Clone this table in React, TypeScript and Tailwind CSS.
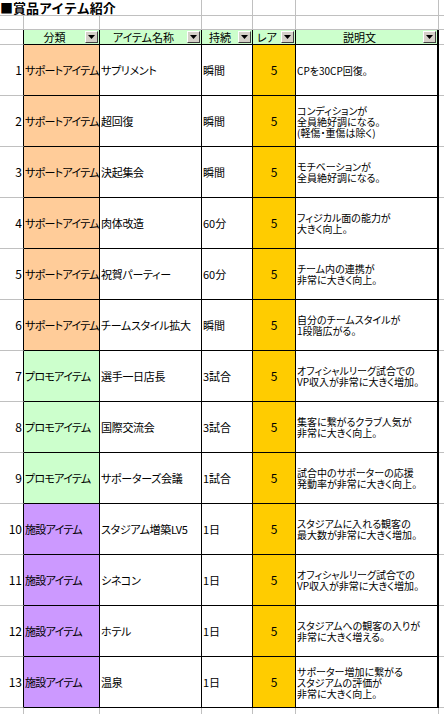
import React from 'react'

type Kind = 'support' | 'promo' | 'facility'

type Item = {
  kind: Kind
  name: string
  dur: string
  desc: string[]
}

const CAT_LABEL: Record<Kind, string> = {
  support: 'サポートアイテム',
  promo: 'プロモアイテム',
  facility: '施設アイテム',
}

const CAT_BG: Record<Kind, string> = {
  support: 'bg-[#ffcc99]',
  promo: 'bg-[#ccffcc]',
  facility: 'bg-[#cc99ff]',
}

const items: Item[] = [
  { kind: 'support', name: 'サプリメント', dur: '瞬間', desc: ['CPを30CP回復。'] },
  { kind: 'support', name: '超回復', dur: '瞬間', desc: ['コンディションが', '全員絶好調になる。', '(軽傷・重傷は除く)'] },
  { kind: 'support', name: '決起集会', dur: '瞬間', desc: ['モチベーションが', '全員絶好調になる。'] },
  { kind: 'support', name: '肉体改造', dur: '60分', desc: ['フィジカル面の能力が', '大きく向上。'] },
  { kind: 'support', name: '祝賀パーティー', dur: '60分', desc: ['チーム内の連携が', '非常に大きく向上。'] },
  { kind: 'support', name: 'チームスタイル拡大', dur: '瞬間', desc: ['自分のチームスタイルが', '1段階広がる。'] },
  { kind: 'promo', name: '選手一日店長', dur: '3試合', desc: ['オフィシャルリーグ試合での', 'VP収入が非常に大きく増加。'] },
  { kind: 'promo', name: '国際交流会', dur: '3試合', desc: ['集客に繋がるクラブ人気が', '非常に大きく向上。'] },
  { kind: 'promo', name: 'サポーターズ会議', dur: '1試合', desc: ['試合中のサポーターの応援', '発動率が非常に大きく向上。'] },
  { kind: 'facility', name: 'スタジアム増築LV5', dur: '1日', desc: ['スタジアムに入れる観客の', '最大数が非常に大きく増加。'] },
  { kind: 'facility', name: 'シネコン', dur: '1日', desc: ['オフィシャルリーグ試合での', 'VP収入が非常に大きく増加。'] },
  { kind: 'facility', name: 'ホテル', dur: '1日', desc: ['スタジアムへの観客の入りが', '非常に大きく増える。'] },
  { kind: 'facility', name: '温泉', dur: '1日', desc: ['サポーター増加に繋がる', 'スタジアムの評価が', '非常に大きく向上。'] },
]

function Gray() {
  return <div className="border-r border-b border-[#c0c0c0]" />
}

function FilterButton() {
  return (
    <div className="mr-px flex h-[12px] w-[13px] shrink-0 items-center justify-center border border-t-white border-l-white border-r-[#404040] border-b-[#404040] bg-[#d4d0c8]">
      <svg width="7" height="4" viewBox="0 0 7 4">
        <path d="M0 0h7L3.5 4z" fill="#000" />
      </svg>
    </div>
  )
}

function HeadCell({ label, last }: { label: string; last?: boolean }) {
  return (
    <div
      className={
        'flex items-center bg-[#ccffcc] border-b border-b-black ' +
        (last ? 'border-r-2 border-r-black' : 'border-r border-r-black')
      }
    >
      <div className="flex-1 text-center text-[11px] leading-none whitespace-nowrap">{label}</div>
      <FilterButton />
    </div>
  )
}

export default function App() {
  return (
    <div className="h-[714px] w-[444px] overflow-hidden bg-white text-black font-['Noto_Sans_CJK_JP',sans-serif] [font-feature-settings:'palt']">
      <div className="grid h-full grid-cols-[24px_76px_102px_51px_43px_143px_1fr] grid-rows-[16px_14px_15px_repeat(13,51px)_1fr]">
        {/* title */}
        <div className="col-span-3 flex items-center border-r border-b border-[#c0c0c0] text-[13px] font-bold leading-none whitespace-nowrap [font-feature-settings:normal]">
          ■賞品アイテム紹介
        </div>
        <Gray />
        <Gray />
        <Gray />
        <div className="border-b border-[#c0c0c0]" />

        {/* blank */}
        <Gray />
        <Gray />
        <Gray />
        <Gray />
        <Gray />
        <Gray />
        <div className="border-b border-[#c0c0c0]" />

        {/* header */}
        <div className="border-r border-b border-r-black border-b-[#c0c0c0]" />
        <HeadCell label="分類" />
        <HeadCell label="アイテム名称" />
        <HeadCell label="持続" />
        <HeadCell label="レア" />
        <HeadCell label="説明文" last />
        <div className="border-b border-[#c0c0c0]" />

        {items.map((it, i) => (
          <React.Fragment key={i}>
            <div className="flex items-center justify-end border-r border-b border-r-black border-b-[#c0c0c0] pr-px text-[12px] leading-none">
              {i + 1}
            </div>
            <div className={'flex items-center overflow-hidden border-r border-b border-black pl-px text-[11px] leading-none tracking-[-0.7px] whitespace-nowrap ' + CAT_BG[it.kind]}>
              {CAT_LABEL[it.kind]}
            </div>
            <div className="flex items-center border-r border-b border-black pl-px text-[11px] leading-none tracking-[-0.3px] whitespace-nowrap">
              {it.name}
            </div>
            <div className="flex items-center border-r border-b border-black pl-px text-[11px] leading-none whitespace-nowrap">
              {it.dur}
            </div>
            <div className="flex items-center justify-center border-r border-b border-black bg-[#ffcc00] text-[12px] leading-none">
              5
            </div>
            <div className="flex flex-col justify-center overflow-hidden border-r-2 border-b border-black pl-px text-[10px] leading-[11px]">
              {it.desc.map((d, j) => (
                <div key={j} className="whitespace-nowrap">
                  {d}
                </div>
              ))}
            </div>
            <div className="border-b border-[#c0c0c0]" />
          </React.Fragment>
        ))}

        {/* bottom */}
        <div className="border-r border-[#c0c0c0]" />
        <div className="border-r border-[#c0c0c0]" />
        <div className="border-r border-[#c0c0c0]" />
        <div className="border-r border-[#c0c0c0]" />
        <div className="border-r border-[#c0c0c0]" />
        <div className="border-r border-[#c0c0c0]" />
        <div />
      </div>
    </div>
  )
}
